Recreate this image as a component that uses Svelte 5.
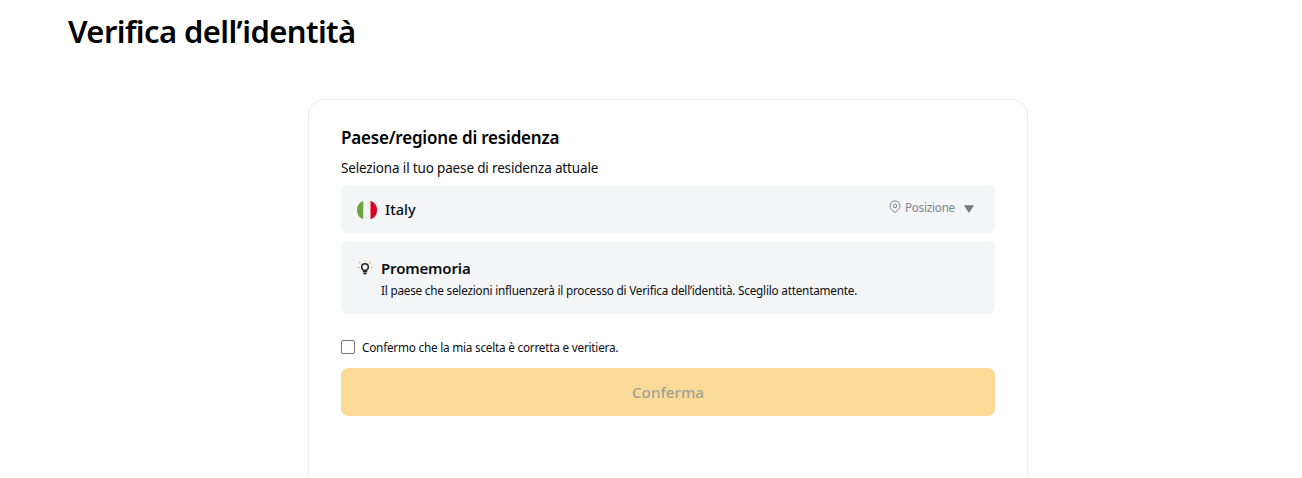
<script>
let confirmed = false;
</script>

<main>
  <h1>Verifica dell’identità</h1>

  <section class="card">
    <h2>Paese/regione di residenza</h2>
    <p class="hint">Seleziona il tuo paese di residenza attuale</p>

    <div class="select">
      <svg class="flag" viewBox="0 0 20 20">
        <path fill="#6da544" d="M6.5 .63a10 10 0 0 0 0 18.74z"/>
        <path fill="#f3f3f3" d="M6.5 .63a10 10 0 0 1 7 0v18.74a10 10 0 0 1-7 0z"/>
        <path fill="#d80027" d="M13.5 .63a10 10 0 0 1 0 18.74z"/>
      </svg>
      <span class="country">Italy</span>
      <span class="location">
        <svg class="pin" viewBox="0 0 12 14">
          <path d="M6 12.6 2.4 9.4a5 5 0 1 1 7.2 0z"/>
          <circle cx="6" cy="5.9" r="1.8"/>
        </svg>
        <span class="place">Posizione</span>
        <svg class="arrow" viewBox="0 0 10 8">
          <path d="M.9 .2h8.2q1 0 .5 .9L5.6 7.2q-.6 .8-1.2 0L.4 1.1Q-.1 .2 .9 .2z"/>
        </svg>
      </span>
    </div>

    <div class="reminder">
      <svg class="bulb" viewBox="0 0 16 16">
        <path class="rays" d="M8 0v1.6M2 1.8l1.5 1.5M14 1.8l-1.5 1.5M.6 7.5h2M13.4 7.5h2"/>
        <circle class="glass" cx="8" cy="7" r="3.3"/>
        <path class="base" d="M5.8 11.5h4.4M6.3 13.5h3.4"/>
      </svg>
      <div>
        <h3>Promemoria</h3>
        <p class="note">Il paese che selezioni influenzerà il processo di Verifica dell’identità. Sceglilo attentamente.</p>
      </div>
    </div>

    <label>
      <input type="checkbox" bind:checked={confirmed}>
      <span class="agree">Confermo che la mia scelta è corretta e veritiera.</span>
    </label>

    <button disabled={!confirmed}>Conferma</button>
  </section>
</main>

<style>
:global(body) {
  background: #fff;
  overflow: hidden;
}

main {
  box-sizing: border-box;
  height: 478px;
  overflow: hidden;
  padding-top: 11px;
  color: #0b0e11;
  font-family: "Segoe UI", "Noto Sans", "Open Sans", sans-serif;
  white-space: nowrap;
}

h1,
h2,
h3,
p {
  margin: 0;
}

h1 {
  margin-left: 68px;
  color: #000;
  font-size: 31px;
  font-weight: 600;
  line-height: 40px;
  letter-spacing: -0.6px;
}

.card {
  box-sizing: border-box;
  width: 720px;
  height: 480px;
  margin: 48px 0 0 308px;
  padding: 26px 32px 0;
  border: 1px solid #ebedef;
  border-radius: 16px;
}

h2 {
  color: #000;
  font-size: 17px;
  font-weight: 600;
  line-height: 24px;
  letter-spacing: -0.19px;
}

.hint {
  margin-top: 8px;
  font-size: 13.5px;
  line-height: 20px;
  letter-spacing: -0.16px;
}

.select {
  display: flex;
  align-items: center;
  box-sizing: border-box;
  width: 654px;
  height: 48px;
  margin-top: 7px;
  padding: 0 21px 0 16px;
  border-radius: 7px;
  background: #f3f5f7;
}

.flag {
  width: 20px;
  height: 20px;
  margin-top: 1px;
}

.country {
  margin-left: 8px;
  font-size: 14.5px;
  font-weight: 500;
}

.location {
  display: flex;
  align-items: center;
  margin-left: auto;
  padding-bottom: 3px;
  color: #81858c;
  font-size: 11.7px;
  letter-spacing: -0.23px;
}

.place {
  padding-bottom: 2px;
}

.pin {
  width: 12px;
  height: 14px;
  margin: 0 4px 1px 0;
  fill: none;
  stroke: #81858c;
}

.arrow {
  width: 10px;
  height: 8px;
  margin: 2px 0 0 9px;
  fill: #76797f;
}

.reminder {
  display: flex;
  box-sizing: border-box;
  width: 654px;
  height: 73px;
  margin-top: 8px;
  padding: 15px 16px;
  border-radius: 7px;
  background: #f3f5f7;
}

.bulb {
  width: 16px;
  height: 16px;
  margin: 4px 8px 0 0;
  fill: none;
}

.rays {
  stroke: #e8b361;
  stroke-width: 1.2;
}

.glass {
  stroke: #1e2329;
  stroke-width: 1.5;
}

.base {
  stroke: #1e2329;
  stroke-width: 1.4;
}

h3 {
  font-size: 15px;
  font-weight: 600;
  line-height: 24px;
  letter-spacing: -0.15px;
}

.note {
  font-size: 11.75px;
  line-height: 20px;
  letter-spacing: -0.22px;
}

label {
  display: flex;
  align-items: center;
  height: 20px;
  margin-top: 24px;
}

input {
  appearance: none;
  box-sizing: border-box;
  width: 14px;
  height: 14px;
  margin: 0 7px 2px 0;
  border: 1px solid #767676;
  border-radius: 2px;
  background: #fff;
}

input:checked {
  background: #f0b90b;
}

.agree {
  padding-bottom: 2px;
  font-size: 11.75px;
  letter-spacing: -0.22px;
}

button {
  display: block;
  width: 654px;
  height: 48px;
  margin-top: 10px;
  padding: 0;
  border: none;
  border-radius: 7px;
  background: #f9b62f;
  color: #0b0e11;
  font: inherit;
  font-size: 15.2px;
  font-weight: 500;
}

button:disabled {
  background: #fbda97;
  color: #a39f96;
}
</style>
